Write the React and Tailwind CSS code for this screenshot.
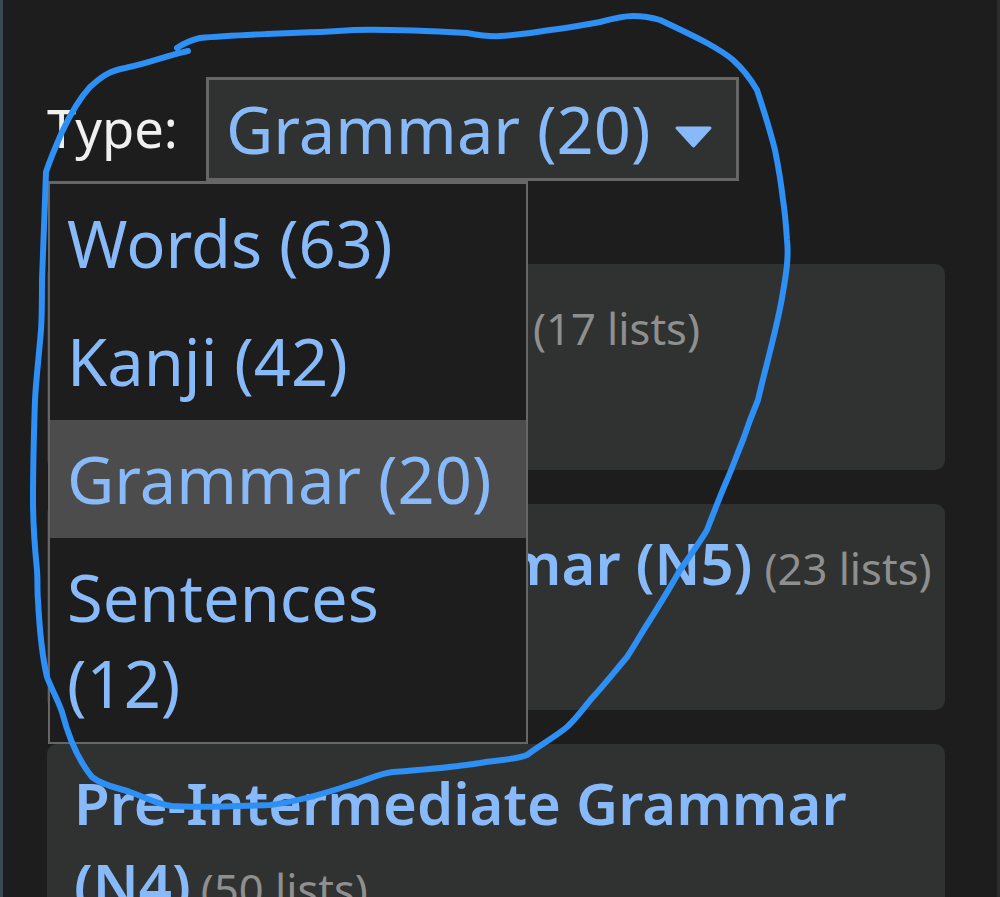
const FONT = "font-['Noto_Sans','Open_Sans',sans-serif]";

function Option({ children, active }) {
  return (
    <div className={`py-4 pl-[17px] pr-7 text-[65px] leading-[86px] text-[#88baf9] ${active ? "bg-[#4c4c4c]" : ""}`}>
      {children}
    </div>
  );
}

function Card({ title, count, titleClass = "", countClass = "ml-[-5px]" }) {
  return (
    <div className="h-[206px] rounded-[10px] bg-[#303232] pb-[18px] pl-[27px] pr-[10px] pt-[18px] text-[58px] leading-[81px]">
      <span className={`font-semibold text-[#88baf9] ${titleClass}`}>{title}</span>{" "}
      <span className={`text-[43.500px] leading-none text-[#8f8f8f] ${countClass}`}>{count}</span>
    </div>
  );
}

export default function App() {
  return (
    <div className={`relative h-[897px] w-[1000px] overflow-hidden bg-[#1d1d1d] ${FONT}`}>
      <div className="h-full border-l-[3px] border-r-[3px] border-l-[#3a4a55] border-r-[#2c2c2c] pl-11 pr-[52px]">
        <div className="flex items-start pt-[77px]">
          <span className="mt-[19px] w-[159px] text-[52.500px] leading-[64px] text-[#f0f0f0]">Type:</span>
          <div className="flex h-[104px] w-[533px] items-center border-[3px] border-[#666666] bg-[#303232] pl-[17px]">
            <span className="text-[65px] leading-none text-[#88baf9]">Grammar (20)</span>
            <svg className="ml-[25px] mt-4" width="37" height="22" viewBox="0 0 37 22">
              <path d="M2 2h33L18.500 20Z" fill="#88baf9" stroke="#88baf9" strokeWidth="3" strokeLinejoin="round" />
            </svg>
          </div>
        </div>
        <div className="mt-[83px] flex flex-col gap-[34px]">
          <Card title="Basic Grammar" count="(17 lists)" countClass="ml-[12px]" />
          <Card title="Beginner Grammar (N5)" count="(23 lists)" titleClass="ml-[3px]" countClass="ml-[-3px]" />
          <Card title="Pre-Intermediate Grammar (N4)" count="(50 lists)" />
        </div>
      </div>

      <div className="absolute left-12 top-[181px] w-[480px] border-[2px] border-t-[3px] border-[#666666] bg-[#1d1d1d]">
        <Option>Words (63)</Option>
        <Option>Kanji (42)</Option>
        <Option active>Grammar (20)</Option>
        <Option>Sentences (12)</Option>
      </div>

      <svg className="pointer-events-none absolute left-0 top-0" width="1000" height="897" viewBox="0 0 1000 897" fill="none">
        <path
          d="M188 51 C165 56 150 63 125 68 C108 71 100 78 90 87 C78 100 70 115 62 132 C55 148 50 160 46 172 L45 200 C44 230 43 260 42 280 C42 300 42 315 41 330 C39 355 36 380 35 400 C34 430 33 470 33 500 C33 530 35 550 37 570 C38 585 37 592 38 600 C40 640 43 660 47 677 C52 690 58 700 62 712 C68 735 78 760 92 777 C105 787 120 788 130 792 C145 797 155 804 172 806 C200 808 240 806 270 805 C295 802 320 795 350 785 C365 781 380 773 393 772 C420 770 455 767 480 763 C495 760 515 760 527 755 C540 745 555 737 567 727 C577 718 585 706 593 697 C605 684 616 670 627 657 C635 645 642 632 650 620 C660 604 670 588 680 570 C690 556 700 542 707 530 C714 512 720 496 727 480 C733 466 738 452 743 440 C748 425 753 412 758 400 C766 365 776 332 782 298 C786 275 789 258 787 240 C786 225 785 212 783 200 C781 182 778 165 775 150 C770 130 763 108 757 90 C750 78 742 68 733 60 C725 53 716 48 707 43 C690 34 675 27 660 20 C650 17 642 16 633 16 C622 16 611 19 600 22 C583 25 567 28 550 30 C533 33 517 35 500 36 C490 37 478 35 467 33 C430 31 390 29 353 30 C325 32 295 33 267 34 C245 35 222 36 200 38 C192 40 184 43 177 48"
          stroke="#2e8ff5"
          strokeWidth="6"
          strokeLinecap="round"
          strokeLinejoin="round"
        />
      </svg>
    </div>
  );
}
